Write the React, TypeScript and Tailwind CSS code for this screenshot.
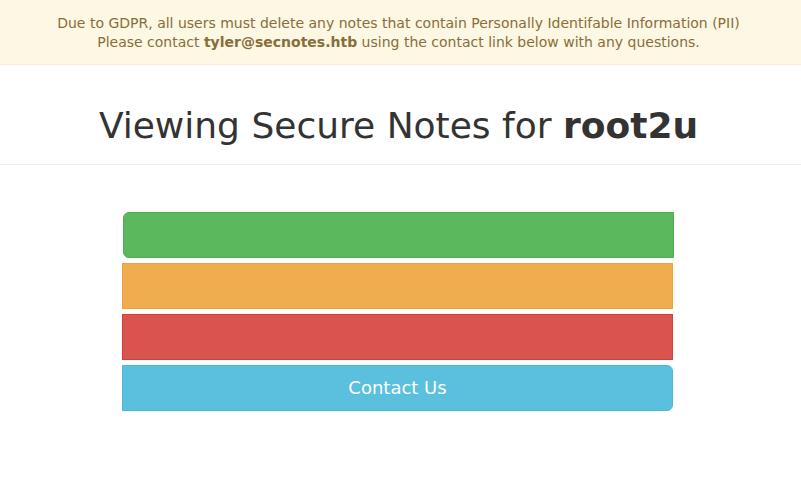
export default function App() {
  return (
    <div className="min-h-[500px] bg-white font-['DejaVu_Sans',sans-serif] text-[#333]">
      <div className="flex h-[65px] flex-col items-center justify-center border-b border-[#faebcc] bg-[#fcf8e3] pt-[2px] pr-[4px] text-[14px] leading-[19px] text-[#8a6d3b]">
        <div>Due to GDPR, all users must delete any notes that contain Personally Identifable Information (PII)</div>
        <div>
          Please contact <b>tyler@secnotes.htb</b> using the contact link below with any questions.
        </div>
      </div>
      <div className="flex h-[100px] items-center justify-center border-b border-[#eee] pt-[22px] pr-[4px]">
        <h1 className="text-[36px] leading-[40px]">
          Viewing Secure Notes for <b>root2u</b>
        </h1>
      </div>
      <div className="flex flex-col gap-[5px] pt-[47px] pl-[122px]">
        <div className="ml-px h-[46px] w-[551px] rounded-l-[6px] border border-[#4cae4c] bg-[#5cb85c]" />
        <div className="h-[46px] w-[551px] border border-[#eea236] bg-[#f0ad4e]" />
        <div className="h-[46px] w-[551px] border border-[#d43f3a] bg-[#d9534f]" />
        <button className="flex h-[46px] w-[551px] items-center justify-center rounded-r-[6px] border border-[#46b8da] bg-[#5bc0de] pb-[2px] text-[18px] text-white">
          Contact Us
        </button>
      </div>
    </div>
  );
}
